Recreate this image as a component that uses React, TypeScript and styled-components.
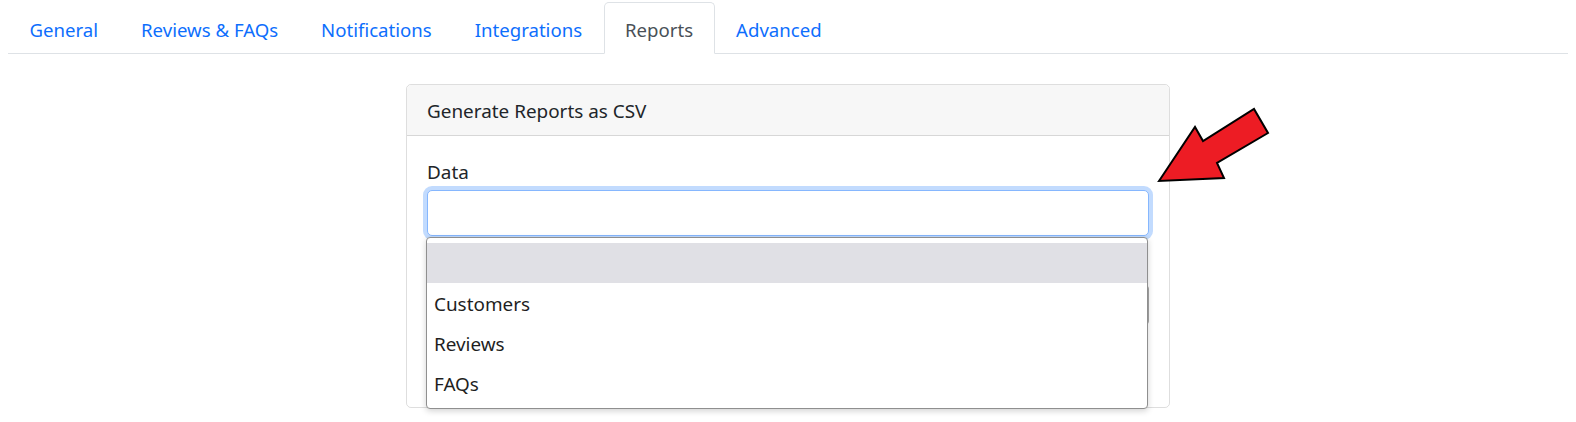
import styled, {createGlobalStyle} from "styled-components";

const tabs = ["General", "Reviews & FAQs", "Notifications", "Integrations", "Reports", "Advanced"];
const options = ["", "Customers", "Reviews", "FAQs"];

function App() {
    return (
        <Page>
            <GlobalStyle/>
            <Nav>
                {tabs.map(t => (
                    <Tab key={t} $active={t === "Reports"}>{t}</Tab>
                ))}
            </Nav>
            <Card>
                <CardHeader>Generate Reports as CSV</CardHeader>
                <CardBody>
                    <FieldGroup>
                        <Label>Data</Label>
                        <Input/>
                        <Dropdown>
                            {options.map((o, i) => (
                                <Option key={`opt_${i}`} $selected={i === 0}>{o}</Option>
                            ))}
                        </Dropdown>
                    </FieldGroup>
                    <SecondField/>
                    <Button type="button">Generate</Button>
                </CardBody>
            </Card>
            <Arrow width="130" height="90" viewBox="0 0 130 90">
                <polygon
                    points="9,81 45,27 53,41 104,9 118,33 67,63 74,78"
                    fill="#ed1c24"
                    stroke="#000"
                    strokeWidth="2"
                    strokeLinejoin="miter"
                />
            </Arrow>
        </Page>
    );
}

/* CSS */

const GlobalStyle = createGlobalStyle`
  body {
    margin: 0;
    background: #fff;
    font-family: "Noto Sans", "Open Sans", sans-serif;
  }
`;

const Page = styled.div`
  position: relative;
  width: 1576px;
  height: 422px;
  padding: 2px 8px 0;
  box-sizing: border-box;
  overflow: hidden;
`;

const Nav = styled.div`
  display: flex;
  border-bottom: 1px solid #dee2e6;
`;

const Tab = styled.div<{ $active?: boolean }>`
  padding: 12.5px 20.5px 8.5px;
  margin-bottom: -1px;
  font-size: 18.6px;
  line-height: 28.8px;
  border: 1px solid ${p => p.$active ? "#dee2e6" : "transparent"};
  border-bottom-color: ${p => p.$active ? "#fff" : "transparent"};
  border-radius: 5px 5px 0 0;
  background: ${p => p.$active ? "#fff" : "transparent"};
  color: ${p => p.$active ? "#495057" : "#0d6efd"};
`;

const Card = styled.div`
  width: 764px;
  margin: 30px auto 0;
  border: 1px solid rgba(0, 0, 0, .13);
  border-radius: 5px;
  box-sizing: border-box;
`;

const CardHeader = styled.div`
  padding: 12px 20px 9px;
  font-size: 18.9px;
  line-height: 28.8px;
  color: #212529;
  background: #f7f7f7;
  border-bottom: 1px solid rgba(0, 0, 0, .13);
  border-radius: 5px 5px 0 0;
`;

const CardBody = styled.div`
  display: flex;
  flex-direction: column;
  padding: 22px 20px 20px;
`;

const FieldGroup = styled.div`
  position: relative;
  display: flex;
  flex-direction: column;
`;

const Label = styled.label`
  font-size: 18.9px;
  line-height: 28.8px;
  color: #212529;
  margin-bottom: 4px;
`;

const Input = styled.div`
  height: 46px;
  box-sizing: border-box;
  border: 1px solid #86b7fe;
  border-radius: 5px;
  background: #fff;
  box-shadow: 0 0 0 4px rgba(13, 110, 253, .25);
`;

const Dropdown = styled.div`
  position: absolute;
  top: 79px;
  left: -1px;
  width: 722px;
  height: 172px;
  box-sizing: border-box;
  padding: 5px 0;
  background: #fff;
  border: 1px solid #8f8f8f;
  border-radius: 4px;
  box-shadow: 0 2px 6px rgba(0, 0, 0, .18);
  z-index: 2;
`;

const Option = styled.div<{ $selected?: boolean }>`
  height: 40px;
  box-sizing: border-box;
  padding: 3px 7px 0;
  display: flex;
  align-items: center;
  font-size: 18.9px;
  color: #1f1f1f;
  background: ${p => p.$selected ? "#e0e0e5" : "#fff"};
`;

const SecondField = styled.div`
  height: 42px;
  margin-top: 48px;
  box-sizing: border-box;
  border: 1px solid #a6a6a6;
  border-radius: 5px;
`;

const Button = styled.button`
  height: 42px;
  width: 140px;
  margin-top: 19px;
  border: 0;
  border-radius: 5px;
  background: #0d6efd;
  color: #fff;
`;

const Arrow = styled.svg`
  position: absolute;
  left: 1150px;
  top: 100px;
`;

/* CSS */

export default App;
